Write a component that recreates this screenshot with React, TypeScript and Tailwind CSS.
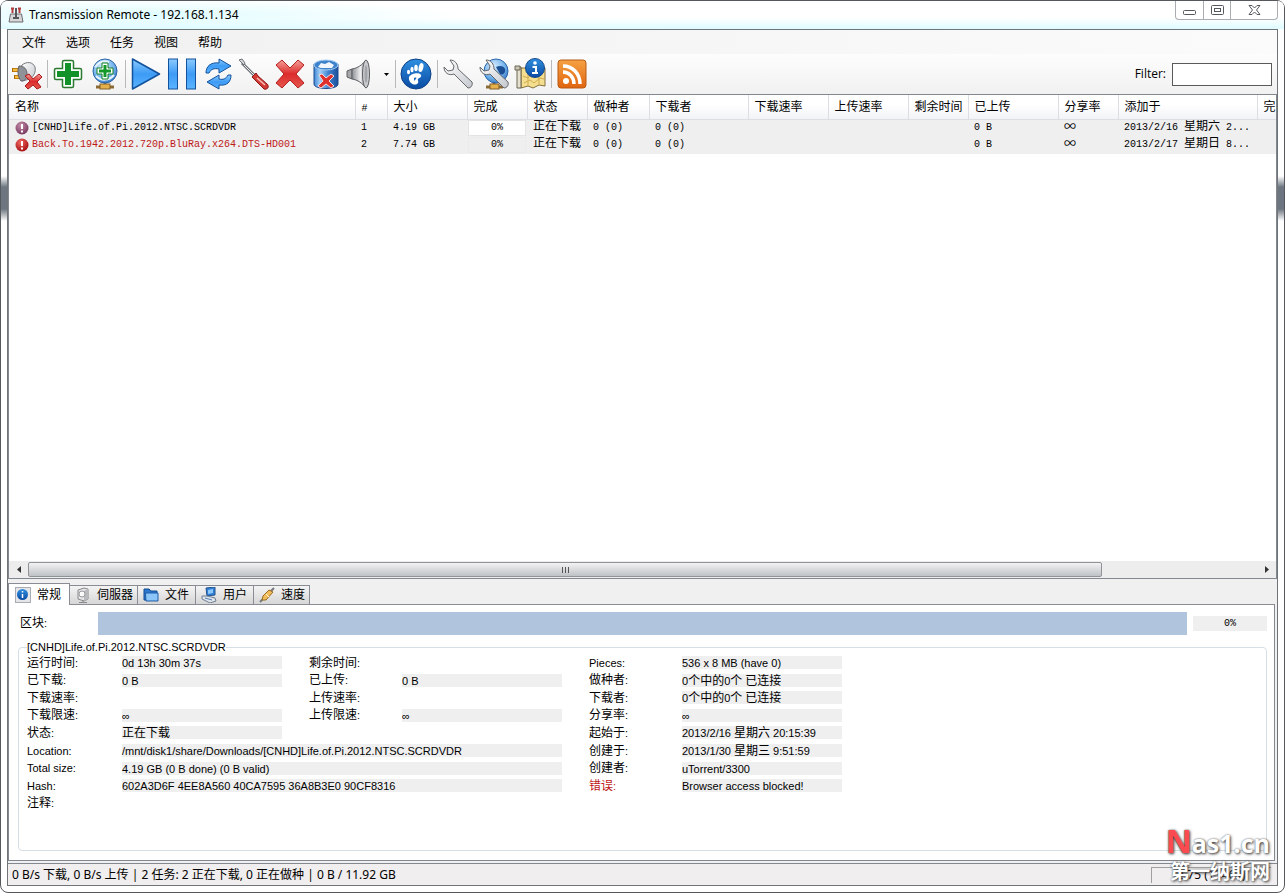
import React, { useState } from 'react';

const UI_FONT = 'font-["Noto_Sans","Noto_Sans_CJK_SC",sans-serif]';
const LIST_FONT = 'font-["Liberation_Mono","Noto_Sans_CJK_SC",monospace]';
const DETAIL_FONT = 'font-["Liberation_Sans","Noto_Sans_CJK_SC",sans-serif]';

// Chinese glyphs are set at 12px, the Latin ones take the size of the parent
const Mixed: React.FC<{ text: string }> = ({ text }) => (
    <>
        {text.split(/([\u3400-\u9fff]+)/).map((part, i) =>
            i % 2 === 1 ? <span key={i} className="text-[12px] leading-3">{part}</span> : part
        )}
    </>
);

/* ---------- toolbar icons ---------- */

const Gradients: React.FC = () => (
    <svg width="0" height="0" className="absolute" aria-hidden="true">
        <defs>
            <linearGradient id="blue" x1="0" y1="0" x2="0" y2="1">
                <stop offset="0" stopColor="#8ccbff" />
                <stop offset="0.5" stopColor="#3d9bf5" />
                <stop offset="1" stopColor="#5cb4ff" />
            </linearGradient>
            <linearGradient id="deepBlue" x1="0" y1="0" x2="0" y2="1">
                <stop offset="0" stopColor="#2f8fe0" />
                <stop offset="1" stopColor="#0a4aa3" />
            </linearGradient>
            <radialGradient id="globe" cx="0.4" cy="0.3" r="0.8">
                <stop offset="0" stopColor="#d6ecff" />
                <stop offset="0.6" stopColor="#6fb0ea" />
                <stop offset="1" stopColor="#2c6cb8" />
            </radialGradient>
            <linearGradient id="can" x1="0" y1="0" x2="1" y2="0">
                <stop offset="0" stopColor="#3d86d6" />
                <stop offset="0.25" stopColor="#a5d0f5" />
                <stop offset="0.6" stopColor="#3f83d0" />
                <stop offset="1" stopColor="#1c4f9a" />
            </linearGradient>
            <linearGradient id="red" x1="0" y1="0" x2="0" y2="1">
                <stop offset="0" stopColor="#f4a09a" />
                <stop offset="0.5" stopColor="#dc2b2b" />
                <stop offset="1" stopColor="#e5584e" />
            </linearGradient>
            <linearGradient id="metal" x1="0" y1="0" x2="1" y2="1">
                <stop offset="0" stopColor="#ffffff" />
                <stop offset="1" stopColor="#c4c8ce" />
            </linearGradient>
            <linearGradient id="cone" x1="0" y1="0" x2="1" y2="0">
                <stop offset="0" stopColor="#8d8f94" />
                <stop offset="0.6" stopColor="#f0f0f2" />
                <stop offset="1" stopColor="#8a8c90" />
            </linearGradient>
            <linearGradient id="orange" x1="0" y1="0" x2="0" y2="1">
                <stop offset="0" stopColor="#f5a243" />
                <stop offset="1" stopColor="#e0640f" />
            </linearGradient>
            <radialGradient id="redBall" cx="0.4" cy="0.3" r="0.7">
                <stop offset="0" stopColor="#f06a62" />
                <stop offset="1" stopColor="#a80f14" />
            </radialGradient>
            <radialGradient id="purpleBall" cx="0.4" cy="0.3" r="0.7">
                <stop offset="0" stopColor="#c58aa8" />
                <stop offset="1" stopColor="#7a3a62" />
            </radialGradient>
        </defs>
    </svg>
);

const Svg: React.FC<{ children: React.ReactNode; size?: number }> = ({ children, size = 32 }) => (
    <svg width={size} height={size} viewBox={`0 0 ${size} ${size}`} fill="none" aria-hidden="true" className="shrink-0">
        {children}
    </svg>
);

const DisconnectIcon = () => (
    <Svg>
        <path d="M2 12h10M4 19h10" stroke="#a86a08" strokeWidth="4" />
        <path d="M3 12h9M5 19h9" stroke="#f9bd3b" strokeWidth="2.500" />
        <path d="M12 7c5-4 11-3 13 2 1 5-1 9-5 12l-8 2c-2-5-2-11 0-16z" fill="url(#metal)" stroke="#77797d" />
        <path d="M9 8c5 0 8 3 8 8s-2 7-6 7c-3-4-4-10-2-15z" fill="#8f9298" stroke="#5f6268" />
        <path d="M15 18l4-2 4 5 6-5 3 3-5 5 4 5-4 2-4-4-5 4-3-3 5-5z" fill="url(#red)" stroke="#a81818" />
    </Svg>
);

const AddIcon = () => (
    <Svg>
        <path d="M12 2.500h8q1.500 0 1.500 1.500v6.500H28q1.500 0 1.500 1.500v8q0 1.500-1.500 1.500h-6.500V28q0 1.500-1.500 1.500h-8q-1.500 0-1.500-1.500v-6.500H4q-1.500 0-1.500-1.500v-8q0-1.500 1.500-1.500h6.500V4q0-1.500 1.500-1.500z" fill="#fff" stroke="#2a7a30" strokeWidth="1.500" />
        <path d="M13 5h6v8h8v6h-8v8h-6v-8H5v-6h8z" fill="#14922a" />
    </Svg>
);

const AddUrlIcon = () => (
    <Svg>
        <path d="M17 24v5M8 29h18" stroke="#8a6a32" strokeWidth="3" />
        <rect x="12" y="26" width="10" height="5" fill="#e5b04a" stroke="#82602a" />
        <circle cx="17" cy="13" r="12" fill="url(#globe)" stroke="#2a64a8" />
        <path d="M7 9c4-5 9-7 14-5M8 18c5 5 13 5 18-1" stroke="#e7f4ff" strokeWidth="2" />
        <path d="M14 5h6v5h5v6h-5v5h-6v-5H9v-6h5z" fill="#fff" stroke="#128022" />
        <path d="M15.500 7h3v4.500H23v3h-4.500V19h-3v-4.500H11v-3h4.500z" fill="#14982a" />
    </Svg>
);

const PlayIcon = () => (
    <Svg>
        <path d="M2.500 1l27 15-27 15z" fill="url(#blue)" stroke="#12519c" strokeWidth="1.500" strokeLinejoin="round" />
    </Svg>
);

const PauseIcon = () => (
    <Svg>
        <rect x="2.500" y="1" width="9" height="30" fill="url(#blue)" stroke="#12519c" />
        <rect x="20.500" y="1" width="9" height="30" fill="url(#blue)" stroke="#12519c" />
    </Svg>
);

const RefreshIcon = () => (
    <Svg>
        <path d="M4 15C4 8 9 4 17 5V1l12 7-12 7v-4c-5-1-8 0-10 4z" fill="url(#blue)" stroke="#12519c" strokeLinejoin="round" />
        <path d="M29 17c0 7-4 11-12 10v4L5 24l12-7v4c4 1 7 0 9-4z" fill="url(#blue)" stroke="#12519c" strokeLinejoin="round" />
    </Svg>
);

const ScrewdriverIcon = () => (
    <Svg>
        <path d="M4 5l13 13" stroke="#6f7277" strokeWidth="3" />
        <path d="M4 5l13 13" stroke="#e8eaec" strokeWidth="1" />
        <path d="M1 2l3-1 3 4-1 2z" fill="#d4d6d9" stroke="#6f7277" />
        <path d="M14 19l4-4 2 3 9 8c3 3 0 6-3 5l-9-9z" fill="#d33a34" stroke="#8c1414" strokeLinejoin="round" />
        <path d="M19 20l8 7" stroke="#f7c0ba" strokeWidth="1.500" />
    </Svg>
);

const DeleteIcon = () => (
    <Svg>
        <path d="M2 7l6-5 8 8 8-8 6 5-8 9 8 9-6 5-8-8-8 8-6-5 8-9z" fill="url(#red)" stroke="#b42020" strokeLinejoin="round" />
    </Svg>
);

const TrashIcon = () => (
    <Svg>
        <path d="M4 6v20c0 6 24 6 24 0V6z" fill="url(#can)" stroke="#1d4c8e" />
        <ellipse cx="16" cy="7" rx="12" ry="5" fill="#3c82cc" stroke="#a9d0f2" />
        <path d="M8 9l3-4 4 1 4-2 5 3-2 3H11z" fill="#f2f6fa" />
        <path d="M9 17l3-1 4 4 5-4 3 2-5 5 5 5-3 2-5-4-5 4-3-2 5-5z" fill="#e0302c" stroke="#f5dcdc" />
    </Svg>
);

const SpeakerIcon = () => (
    <Svg>
        <path d="M1 13l5-2v10l-5-2z" fill="#a4a6aa" stroke="#5c5e62" />
        <path d="M6 11c6-1 10-4 14-9v28c-4-5-8-8-14-9z" fill="url(#cone)" stroke="#5c5e62" />
        <ellipse cx="20" cy="16" rx="3.500" ry="14" fill="#c8cacd" stroke="#5c5e62" />
        <ellipse cx="20" cy="16" rx="1.500" ry="9" fill="#a2a4a8" />
    </Svg>
);

const FootIcon = () => (
    <Svg>
        <circle cx="16" cy="16" r="15" fill="url(#deepBlue)" stroke="#0c3f86" />
        <path d="M9 19c2-4 11-5 12-2 1 2-2 3-3 4s1 2 0 4c-3 4-10 0-9-6z" fill="#fff" />
        <path d="M14 20c2-1 3 0 2 1l-2 2z" fill="#1e6cc0" />
        <ellipse cx="8.500" cy="14" rx="1.500" ry="2.300" fill="#fff" />
        <ellipse cx="12" cy="11.500" rx="1.600" ry="2.800" fill="#fff" />
        <ellipse cx="16" cy="10" rx="1.800" ry="3.200" fill="#fff" />
        <ellipse cx="21" cy="9.500" rx="2.300" ry="4.500" fill="#fff" transform="rotate(14 21 9.500)" />
    </Svg>
);

const wrenchPath = 'M8 2c5 0 8 4 8 9l14 13c1 3-1 6-4 6L12 16c-5 2-10-1-10-7l4 4 5-1 1-4z';

const WrenchIcon = () => (
    <Svg>
        <path d={wrenchPath} fill="url(#metal)" stroke="#65676b" strokeLinejoin="round" />
    </Svg>
);

const NetWrenchIcon = () => (
    <Svg>
        <path d="M16 24v5M8 29h17" stroke="#8a6a32" strokeWidth="3" />
        <rect x="12" y="26" width="9" height="5" fill="#e5b04a" stroke="#82602a" />
        <circle cx="18" cy="13" r="12" fill="url(#globe)" stroke="#2a64a8" />
        <path d="M18 9c4-2 8-1 9 2s-2 7-5 5z" fill="#1d4f95" />
        <path d={wrenchPath} fill="url(#metal)" stroke="#65676b" strokeLinejoin="round" />
    </Svg>
);

const InfoIcon = () => (
    <Svg>
        <path d="M7 10h24v18l-6-1-6 3-5-2-7 2z" fill="#f4df90" stroke="#86703a" />
        <path d="M9 18l5 2 4-4M10 25l6-3 4 3 6-5 4 1M14 11v17M25 12v15" stroke="#d0ab50" />
        <path d="M3 9h4v21H3z" fill="#e6e2d2" stroke="#6c6650" />
        <path d="M1 8h5v4H1z" fill="#c9c6b8" stroke="#6c6650" />
        <circle cx="21" cy="10" r="9.500" fill="url(#deepBlue)" stroke="#16488c" />
        <circle cx="21" cy="5" r="1.800" fill="#fff" />
        <path d="M18.500 9H22v6M18 15h6" stroke="#fff" strokeWidth="2" />
    </Svg>
);

const RssIcon = () => (
    <Svg>
        <rect x="2" y="2" width="28" height="28" rx="3" fill="url(#orange)" stroke="#b95a14" />
        <circle cx="10" cy="23" r="3" fill="#fff" />
        <path d="M7 14c6 0 11 5 11 12M7 8c10 0 17 8 17 18" stroke="#fff" strokeWidth="3.500" />
    </Svg>
);

type ToolItem = { label: string; Icon: React.FC } | 'sep' | 'more';

const TOOLS: ToolItem[] = [
    { label: 'Disconnect', Icon: DisconnectIcon },
    'sep',
    { label: 'Add torrent', Icon: AddIcon },
    { label: 'Add torrent from URL', Icon: AddUrlIcon },
    'sep',
    { label: 'Start', Icon: PlayIcon },
    { label: 'Pause', Icon: PauseIcon },
    { label: 'Recheck', Icon: RefreshIcon },
    { label: 'Configure torrent', Icon: ScrewdriverIcon },
    { label: 'Remove', Icon: DeleteIcon },
    { label: 'Remove and delete', Icon: TrashIcon },
    { label: 'Reannounce', Icon: SpeakerIcon },
    'more',
    'sep',
    { label: 'Open network share', Icon: FootIcon },
    'sep',
    { label: 'Local settings', Icon: WrenchIcon },
    { label: 'Remote settings', Icon: NetWrenchIcon },
    { label: 'Session stats', Icon: InfoIcon },
    'sep',
    { label: 'RSS', Icon: RssIcon },
];

/* ---------- tab icons ---------- */

const TabInfoIcon = () => (
    <Svg size={16}>
        <rect x="0.500" y="0.500" width="15" height="15" fill="#e3e5e8" stroke="#a9adb3" />
        <circle cx="7.500" cy="7.500" r="5.500" fill="url(#deepBlue)" />
        <path d="M7.500 4v1.500M7.500 7v4" stroke="#fff" strokeWidth="1.500" />
    </Svg>
);
const TabServerIcon = () => (
    <Svg size={16}>
        <path d="M3 3l6-2 4 1v10l-4 2-6-2z" fill="#e4e4e6" stroke="#8a8a8e" />
        <path d="M9 4l4-2v10l-4 2z" fill="#b9babd" />
        <circle cx="7" cy="7" r="3" fill="#fafafa" stroke="#9a9a9e" />
        <path d="M4 15.500h8M8 13v2" stroke="#8a8a8e" />
    </Svg>
);
const TabFolderIcon = () => (
    <Svg size={16}>
        <path d="M1 13V2h5l2 2h6v9z" fill="#2c78cf" stroke="#134a92" />
        <path d="M2.500 6H15v8H3z" fill="#8cc6f8" stroke="#1d5ba8" />
    </Svg>
);
const TabPeersIcon = () => (
    <Svg size={16}>
        <path d="M5 1l9-1v8l-8 1z" fill="#2f7fd8" stroke="#24528c" />
        <path d="M7 3l5-1v4l-5 1z" fill="#8cc8fa" />
        <path d="M1 9l5 0 8 2 1 3-6 2-8-4z" fill="#dfe4ea" stroke="#6f7f92" />
        <path d="M4 11l7 2" stroke="#4f7fb4" />
    </Svg>
);
const TabSpeedIcon = () => (
    <Svg size={16}>
        <path d="M1 15l4-4M11 5l4-4" stroke="#77797d" strokeWidth="2" />
        <path d="M4 9l6-6 4 2-7 8-4 0z" fill="#f1bd5c" stroke="#9a6a1c" />
        <path d="M7 7l3 3" stroke="#fff3d6" />
    </Svg>
);

const TABS = [
    { label: '常规', Icon: TabInfoIcon, width: 'w-[62px]' },
    { label: '伺服器', Icon: TabServerIcon, width: 'w-[68px]' },
    { label: '文件', Icon: TabFolderIcon, width: 'w-[58px]' },
    { label: '用户', Icon: TabPeersIcon, width: 'w-[58px]' },
    { label: '速度', Icon: TabSpeedIcon, width: 'w-[56px]' },
];

/* ---------- data ---------- */

const MENU = ['文件', '选项', '任务', '视图', '帮助'];

const COLUMNS = [
    '名称', '#', '大小', '完成', '状态', '做种者', '下载者',
    '下载速率', '上传速率', '剩余时间', '已上传', '分享率', '添加于', '完',
];

const TORRENTS = [
    {
        name: '[CNHD]Life.of.Pi.2012.NTSC.SCRDVDR',
        error: false,
        cells: ['1', '4.19 GB', '0%', '正在下载', '0 (0)', '0 (0)', '', '', '', '0 B', '∞', '2013/2/16 星期六 2...', ''],
    },
    {
        name: 'Back.To.1942.2012.720p.BluRay.x264.DTS-HD001',
        error: true,
        cells: ['2', '7.74 GB', '0%', '正在下载', '0 (0)', '0 (0)', '', '', '', '0 B', '∞', '2013/2/17 星期日 8...', ''],
    },
];

interface Field {
    label: string;
    value?: string;
    col: 'a' | 'b' | 'c';
    wide?: boolean;
    error?: boolean;
}

const FIELDS: Field[] = [
    { col: 'a', label: '运行时间:', value: '0d 13h 30m 37s' },
    { col: 'b', label: '剩余时间:' },
    { col: 'c', label: 'Pieces:', value: '536 x 8 MB (have 0)' },
    { col: 'a', label: '已下载:', value: '0 B' },
    { col: 'b', label: '已上传:', value: '0 B' },
    { col: 'c', label: '做种者:', value: '0个中的0个 已连接' },
    { col: 'a', label: '下载速率:' },
    { col: 'b', label: '上传速率:' },
    { col: 'c', label: '下载者:', value: '0个中的0个 已连接' },
    { col: 'a', label: '下载限速:', value: '∞' },
    { col: 'b', label: '上传限速:', value: '∞' },
    { col: 'c', label: '分享率:', value: '∞' },
    { col: 'a', label: '状态:', value: '正在下载' },
    { col: 'c', label: '起始于:', value: '2013/2/16 星期六 20:15:39' },
    { col: 'a', label: 'Location:', value: '/mnt/disk1/share/Downloads/[CNHD]Life.of.Pi.2012.NTSC.SCRDVDR', wide: true },
    { col: 'c', label: '创建于:', value: '2013/1/30 星期三 9:51:59' },
    { col: 'a', label: 'Total size:', value: '4.19 GB (0 B done) (0 B valid)', wide: true },
    { col: 'c', label: '创建者:', value: 'uTorrent/3300' },
    { col: 'a', label: 'Hash:', value: '602A3D6F 4EE8A560 40CA7595 36A8B3E0 90CF8316', wide: true },
    { col: 'c', label: '错误:', value: 'Browser access blocked!', error: true },
    { col: 'a', label: '注释:' },
];

const LABEL_COL = { a: 'col-start-1', b: 'col-start-3', c: 'col-start-5' };

/* ---------- window parts ---------- */

const TitleBar: React.FC = () => (
    <header className="flex h-7 shrink-0 items-start rounded-t-md bg-[radial-gradient(ellipse_320px_16px_at_140px_14px,#dffcff,transparent),linear-gradient(to_bottom,#fff_60%,#ddfbff)] pl-[7px]">
        <div className="flex h-7 items-center gap-[5px]">
            <Svg size={16}>
                <path d="M2.500 7h11l1.500 8H1z" fill="#d6d6d8" stroke="#6c6c70" />
                <path d="M4.500 6V2.500M11.500 6V2.500M3 1.500h3M10 1.500h3" stroke="#b83a3a" strokeWidth="2" />
                <path d="M8 1v9M5 11h6" stroke="#55575b" strokeWidth="2" />
            </Svg>
            <h1 className={`text-[12px] text-black ${UI_FONT}`}>Transmission Remote - 192.168.1.134</h1>
        </div>
        <div className="mr-1.5 ml-auto flex h-[19px] rounded-b border border-t-0 border-[#a9acb0] bg-white">
            <button type="button" aria-label="Minimize" className="flex w-7 items-center justify-center border-r border-[#a9acb0]">
                <svg width="13" height="14" fill="none"><rect x="0.500" y="7.500" width="12" height="4" rx="1" stroke="#55585d" /></svg>
            </button>
            <button type="button" aria-label="Maximize" className="flex w-[27px] items-center justify-center border-r border-[#a9acb0]">
                <svg width="13" height="12" fill="none" stroke="#55585d"><rect x="0.500" y="1.500" width="12" height="9" rx="1" /><rect x="3.500" y="4.500" width="6" height="3" /></svg>
            </button>
            <button type="button" aria-label="Close" className="flex w-[46px] items-center justify-center">
                <svg width="13" height="12" fill="none"><path d="M1 1.500h3l2.500 2.500L9 1.500h3L8.500 6l3.500 4.500H9L6.500 8 4 10.500H1L4.500 6z" stroke="#55585d" /></svg>
            </button>
        </div>
    </header>
);

const Toolbar: React.FC = () => (
    <div className="flex h-10 shrink-0 items-center bg-linear-to-b from-[#fdfdfd] to-[#f1f1f1]">
        {TOOLS.map((tool, i) => {
            if (tool === 'sep') {
                return <div key={i} className="flex w-1.5 justify-center"><div className="h-7 w-px bg-[#b9b9b9]" /></div>;
            }
            if (tool === 'more') {
                return (
                    <button key={i} type="button" aria-label="More" className="flex w-3 justify-center">
                        <svg width="5" height="3"><path d="M0 0h5L2.500 3z" fill="#000" /></svg>
                    </button>
                );
            }
            return (
                <button key={i} type="button" aria-label={tool.label} className="flex w-9 justify-center">
                    <tool.Icon />
                </button>
            );
        })}
        <label htmlFor="filter" className="ml-auto pr-1.5 font-['Open_Sans',sans-serif] text-[12px]">Filter:</label>
        <input id="filter" type="text" className="mr-[5px] h-[23px] w-[100px] border border-[#5a5a5a] bg-white px-1 text-xs" />
    </div>
);

const TorrentList: React.FC = () => (
    <section className="flex min-h-0 flex-1 flex-col border border-[#828790] bg-white">
        <div className="flex-1 overflow-hidden">
            <table className={`w-full table-fixed border-collapse text-[10px] text-black ${LIST_FONT}`}>
                <colgroup>
                    <col />
                    <col className="w-8" />
                    <col className="w-20" />
                    <col className="w-[60px]" />
                    <col className="w-[60px]" />
                    <col className="w-[62px]" />
                    <col className="w-[99px]" />
                    <col className="w-20" />
                    <col className="w-20" />
                    <col className="w-[60px]" />
                    <col className="w-[90px]" />
                    <col className="w-[60px]" />
                    <col className="w-[139px]" />
                    <col className="w-[19px]" />
                </colgroup>
                <thead>
                    <tr className="h-6 bg-linear-to-b from-white from-40% to-[#f2f3f6]">
                        {COLUMNS.map(name => (
                            <th key={name} className="overflow-hidden border-r border-b border-[#dcdee3] p-0 pt-1 pl-1.5 text-left leading-4 font-normal whitespace-nowrap last:border-r-0">
                                <Mixed text={name} />
                            </th>
                        ))}
                    </tr>
                </thead>
                <tbody>
                    {TORRENTS.map((t, row) => (
                        <tr key={t.name} className="h-[17px] bg-[#efefef] leading-4">
                            <td className={`p-0 pl-1.5 whitespace-nowrap ${t.error ? 'text-[#c01818]' : ''}`}>
                                <div className="flex items-center gap-[3px]">
                                    <Svg size={14}>
                                        <circle cx="7" cy="7" r="6.500" fill={t.error ? 'url(#redBall)' : 'url(#purpleBall)'} />
                                        <path d="M7 3v5M7 9.500v2" stroke="#fff" strokeWidth="2" />
                                    </Svg>
                                    {t.name}
                                </div>
                            </td>
                            {t.cells.map((cell, i) =>
                                i === 2 ? (
                                    <td key={i} className="p-0 px-px">
                                        <div className={`h-4 border text-center leading-[14px] ${row === 0 ? 'border-[#e4e4e4] bg-white' : 'border-[#ebebeb] bg-[#efefef]'}`}>
                                            {cell}
                                        </div>
                                    </td>
                                ) : (
                                    <td key={i} className="overflow-hidden p-0 pl-1.5 whitespace-nowrap">
                                        {cell === '∞'
                                            ? <span className="font-['Noto_Sans_CJK_SC',sans-serif] text-[12px] leading-3">∞</span>
                                            : <Mixed text={cell} />}
                                    </td>
                                )
                            )}
                        </tr>
                    ))}
                </tbody>
            </table>
        </div>
        <div className="flex h-[17px] items-stretch bg-[#ededed]">
            <button type="button" aria-label="Scroll left" className="flex w-[19px] items-center justify-center">
                <svg width="4" height="7"><path d="M4 0v7L0 3.500z" fill="#333" /></svg>
            </button>
            <div className="flex-1">
                <div className="my-px flex h-[15px] w-[87.4%] items-center justify-center gap-px rounded-xs border border-[#8f9296] bg-linear-to-b from-[#f3f3f4] to-[#bfc2c6]">
                    <span className="mr-px h-1.5 w-px bg-[#555]" />
                    <span className="mr-px h-1.5 w-px bg-[#555]" />
                    <span className="h-1.5 w-px bg-[#555]" />
                </div>
            </div>
            <button type="button" aria-label="Scroll right" className="flex w-[19px] items-center justify-center">
                <svg width="4" height="7"><path d="M0 0v7l4-3.500z" fill="#333" /></svg>
            </button>
        </div>
    </section>
);

const GeneralPanel: React.FC = () => (
    <div className={`mr-0.5 flex flex-1 flex-col border border-t-0 border-[#828790] bg-white pt-[7px] pr-[7px] pb-[9px] pl-[9px] text-[11px] text-black ${DETAIL_FONT}`}>
        <div className="flex h-[23px] items-center">
            <span className="w-20 pl-0.5"><Mixed text="区块:" /></span>
            <div className="mr-1.5 h-full flex-1 bg-[#b0c4de]" />
            <div className={`h-[15px] w-[74px] bg-[#efefef] text-center text-[10px] leading-[15px] ${LIST_FONT}`}>0%</div>
        </div>
        <fieldset className="mt-1.5 min-w-0 flex-1 rounded border border-[#d5dfe5] px-2">
            <legend className="h-[13px] leading-[13px]">[CNHD]Life.of.Pi.2012.NTSC.SCRDVDR</legend>
            <dl className="grid h-[158px] auto-rows-fr grid-cols-[95px_187px_93px_187px_93px_160px]">
                {FIELDS.map(f => (
                    <React.Fragment key={f.col + f.label}>
                        <dt className={`flex items-center leading-4 whitespace-pre ${LABEL_COL[f.col]} ${f.error ? 'text-[#c01818]' : ''}`}>
                            <span><Mixed text={f.label} /></span>
                        </dt>
                        <dd className={`flex items-center ${f.wide ? 'col-span-3' : ''} ${f.col === 'c' ? '' : 'mr-[27px]'}`}>
                            {f.value && (
                                <span className="h-[13px] w-full bg-[#efefef] leading-[14px] whitespace-nowrap"><Mixed text={f.value} /></span>
                            )}
                        </dd>
                    </React.Fragment>
                ))}
            </dl>
        </fieldset>
    </div>
);

const App: React.FC = () => {
    const [tab, setTab] = useState(0);

    return (
        <div className="relative flex min-h-screen flex-col rounded-lg border border-[#55585c] bg-[linear-gradient(to_bottom,#fff_175px,#6d7680_186px,#6d7680_208px,#fff_220px)] px-1.5 pb-1.5">
            <Gradients />
            <div className="-mx-1.5">
                <TitleBar />
            </div>
            <main className="flex flex-1 flex-col border border-[#6f7478] bg-[#f0f0f0]">
                <nav className="flex h-6 shrink-0 items-center bg-linear-to-r from-[#f0f0f0] to-[#fbfbfb] pt-0.5 pl-1">
                    {MENU.map(item => (
                        <button key={item} type="button" className={`w-11 text-center text-[12px] text-black ${UI_FONT}`}>{item}</button>
                    ))}
                </nav>
                <Toolbar />
                <TorrentList />
                <section className="flex h-[284px] shrink-0 flex-col pt-1 pb-0.5">
                    <div role="tablist" className="flex h-[22px] items-end">
                        {TABS.map(({ label, Icon, width }, i) => (
                            <button
                                key={label}
                                type="button"
                                role="tab"
                                aria-selected={i === tab}
                                onClick={() => setTab(i)}
                                className={`flex items-center gap-1.5 border border-[#898c95] pl-1.5 text-[12px] leading-4 text-black ${width} ${UI_FONT} ${
                                    i === tab
                                        ? 'h-[22px] border-b-0 bg-white'
                                        : 'h-5 border-l-0 bg-linear-to-b from-[#f4f4f4] to-[#d6d6d6] pl-[5px]'
                                }`}
                            >
                                <Icon />
                                {label}
                            </button>
                        ))}
                        <div className="mr-0.5 flex-1 self-stretch border-b border-[#898c95]" />
                    </div>
                    <GeneralPanel />
                </section>
                <footer className={`flex h-[22px] shrink-0 items-center border-t border-[#828790] bg-[#f0eeee] pl-1 text-[12px] text-black ${UI_FONT}`}>
                    <span>0 B/s 下载, 0 B/s 上传 | 2 任务: 2 正在下载, 0 正在做种 | 0 B / 11.92 GB</span>
                    <span className="mr-1.5 ml-auto flex h-4 w-[120px] items-center justify-center border-t border-l border-[#a0a0a0]">2.75 (13464)</span>
                </footer>
            </main>
            {/* site stamp in the corner */}
            <div className="pointer-events-none absolute right-3.5 bottom-2 font-['Open_Sans','Noto_Sans_CJK_SC',sans-serif] font-bold text-white [text-shadow:1px_1px_3px_#333,0_0_2px_#888]">
                <div className="text-right text-[25px] leading-[34px] whitespace-nowrap"><span className="text-[32px] text-[#fb4b50]">N</span>as1.cn</div>
                <div className="text-right text-[20px] leading-6">第一纳斯网</div>
            </div>
        </div>
    );
};

export default App;
